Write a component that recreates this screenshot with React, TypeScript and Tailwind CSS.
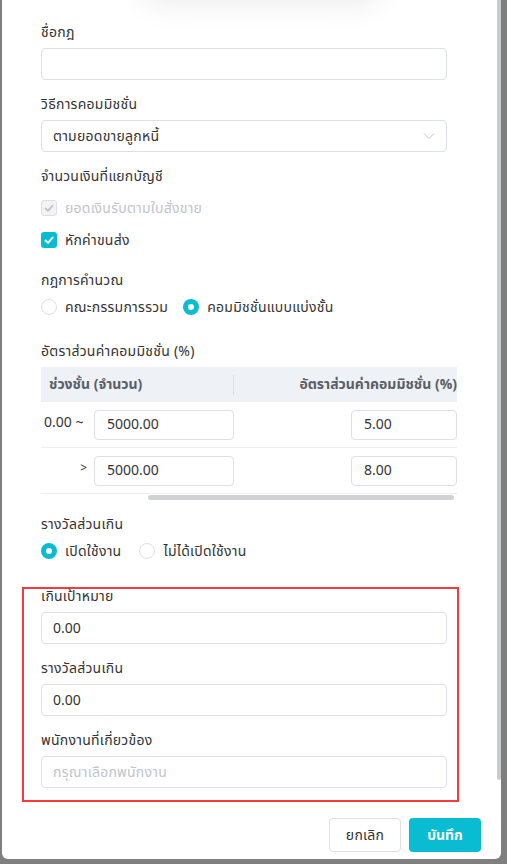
import React from "react";

const FONT = { fontFamily: '"Noto Sans Thai", "Noto Sans", Tahoma, "Liberation Sans", sans-serif' };

function Label({ children }: { children: React.ReactNode }) {
  return <div className="h-[22px] leading-[25px] text-[14px] tracking-[0.25px] text-[#333333] mb-[6px]">{children}</div>;
}

function Input({ value, placeholder }: { value?: string; placeholder?: string }) {
  return (
    <div className="h-[32px] w-[406px] rounded-[4px] border border-[#dcdfe6] bg-white px-[11px] flex items-center text-[14px]">
      {value ? <span className="text-[#333333]">{value}</span> : <span className="text-[#c0c4cc] tracking-[0.25px]">{placeholder}</span>}
    </div>
  );
}

function Radio({ checked, label }: { checked: boolean; label: string }) {
  return (
    <div className="flex items-center gap-[8px]">
      {checked ? (
        <span className="w-[16px] h-[16px] rounded-full bg-[#0abcd1] flex items-center justify-center">
          <span className="w-[6px] h-[6px] rounded-full bg-white" />
        </span>
      ) : (
        <span className="w-[16px] h-[16px] rounded-full border border-[#dcdfe6] bg-white" />
      )}
      <span className="text-[14px] tracking-[0.25px] text-[#333333]">{label}</span>
    </div>
  );
}

function Check({ disabled }: { disabled?: boolean }) {
  return disabled ? (
    <span className="w-[16px] h-[16px] rounded-[3px] border border-[#dcdfe6] bg-[#f2f3f5] flex items-center justify-center">
      <svg width="10" height="8" viewBox="0 0 10 8"><path d="M1 4 L4 6.8 L9 1.2" fill="none" stroke="#c0c4cc" strokeWidth="2" /></svg>
    </span>
  ) : (
    <span className="w-[16px] h-[16px] rounded-[3px] bg-[#0abcd1] flex items-center justify-center">
      <svg width="10" height="8" viewBox="0 0 10 8"><path d="M1 4 L4 6.8 L9 1.2" fill="none" stroke="#ffffff" strokeWidth="2" /></svg>
    </span>
  );
}

function SmallInput({ value, w }: { value: string; w: string }) {
  return (
    <div className={`${w} h-[30px] rounded-[4px] border border-[#dcdfe6] bg-white pl-[12px] flex items-center text-[14px] text-[#333333]`}>
      {value}
    </div>
  );
}

export default function App() {
  return (
    <div style={FONT} className="relative w-[507px] h-[864px] overflow-hidden bg-[#7f7f7f]">
      <div className="ml-[2px] w-[499px] h-[859px] bg-white rounded-b-[6px] relative flex flex-col overflow-hidden">
        {/* header shadow from above */}
        <div className="absolute left-[140px] top-[-40px] w-[240px] h-[40px] rounded-full shadow-[0_6px_30px_rgba(0,0,0,0.07)]" />
        <div className="flex">
          <div className="flex-1 pl-[39px] pt-[20px] h-[802px]">
            <Label>ชื่อกฎ</Label>
            <div className="mb-[12px]"><Input /></div>

            <Label>วิธีการคอมมิชชั่น</Label>
            <div className="mb-[12px] h-[32px] w-[406px] rounded-[4px] border border-[#dcdfe6] px-[11px] flex items-center justify-between text-[14px] tracking-[0.25px] text-[#333333]">
              <span>ตามยอดขายลูกหนี้</span>
              <svg width="12" height="8" viewBox="0 0 12 8"><path d="M1 1.5 L6 6.5 L11 1.5" fill="none" stroke="#c0c4cc" strokeWidth="1" /></svg>
            </div>

            <Label>จำนวนเงินที่แยกบัญชี</Label>
            <div className="h-[32px] flex items-center gap-[8px]">
              <Check disabled />
              <span className="text-[14px] tracking-[0.25px] text-[#c0c4cc]">ยอดเงินรับตามใบสั่งขาย</span>
            </div>
            <div className="h-[32px] flex items-center gap-[8px] mb-[12px]">
              <Check />
              <span className="text-[14px] tracking-[0.25px] text-[#333333]">หักค่าขนส่ง</span>
            </div>

            <Label>กฎการคำนวณ</Label>
            <div className="h-[22px] flex items-center gap-[15px] mb-[22px]">
              <Radio checked={false} label="คณะกรรมการรวม" />
              <Radio checked label="คอมมิชชั่นแบบแบ่งชั้น" />
            </div>

            <div className="h-[22px] leading-[24px] text-[14px] tracking-[0.25px] text-[#333333] mb-[5px]">อัตราส่วนค่าคอมมิชชั่น (%)</div>
            <div className="w-[416px]">
              <div className="h-[35px] bg-[#eef1f6] flex items-center text-[14px] font-bold text-[#5a5e66]">
                <div className="w-[193px] pl-[8px] border-r border-[#dcdfe6] h-[20px] flex items-center">ช่วงชั้น (จำนวน)</div>
                <div className="flex-1 text-right">อัตราส่วนค่าคอมมิชชั่น (%)</div>
              </div>
              <div className="h-[46px] border-b border-[#ebeef5] flex items-center text-[14px] text-[#333333]">
                <div className="w-[53px] pl-[3px] mb-[4px]">0.00 ~</div>
                <SmallInput value="5000.00" w="w-[140px]" />
                <div className="flex-1" />
                <SmallInput value="5.00" w="w-[106px]" />
              </div>
              <div className="h-[46px] border-b border-[#ebeef5] flex items-center text-[14px] text-[#333333]">
                <div className="w-[53px] pr-[7px] text-right text-[12px] mb-[6px]">&gt;</div>
                <SmallInput value="5000.00" w="w-[140px]" />
                <div className="flex-1" />
                <SmallInput value="8.00" w="w-[106px]" />
              </div>
              <div className="h-[6px] pt-[1px] flex">
                <div className="ml-[107px] w-[306px] h-[5px] rounded-full bg-[#d0d2d5]" />
              </div>
            </div>

            <div className="mt-[12px]"><Label>รางวัลส่วนเกิน</Label></div>
            <div className="h-[22px] flex items-center gap-[18px] mb-[22px]">
              <Radio checked label="เปิดใช้งาน" />
              <Radio checked={false} label="ไม่ได้เปิดใช้งาน" />
            </div>

            <Label>เกินเป้าหมาย</Label>
            <div className="mb-[12px]"><Input value="0.00" /></div>
            <Label>รางวัลส่วนเกิน</Label>
            <div className="mb-[12px]"><Input value="0.00" /></div>
            <Label>พนักงานที่เกี่ยวข้อง</Label>
            <Input placeholder="กรุณาเลือกพนักงาน" />
          </div>
          <div className="w-[4px] h-[780px] bg-[#c9cccf] rounded-b-[2px]" />
        </div>
        <div className="flex justify-end gap-[8px] pr-[20px] pt-[16px]">
          <div className="w-[72px] h-[34px] rounded-[4px] border border-[#dcdfe6] flex items-center justify-center text-[14px] tracking-[0.25px] text-[#333333]">ยกเลิก</div>
          <div className="w-[72px] h-[34px] rounded-[4px] bg-[#0abcd1] flex items-center justify-center text-[14px] font-bold text-white">บันทึก</div>
        </div>
        {/* annotation box */}
        <div className="absolute left-[20px] top-[587px] w-[437px] h-[215px] border-2 border-[#f33b3b]" />
      </div>
    </div>
  );
}
